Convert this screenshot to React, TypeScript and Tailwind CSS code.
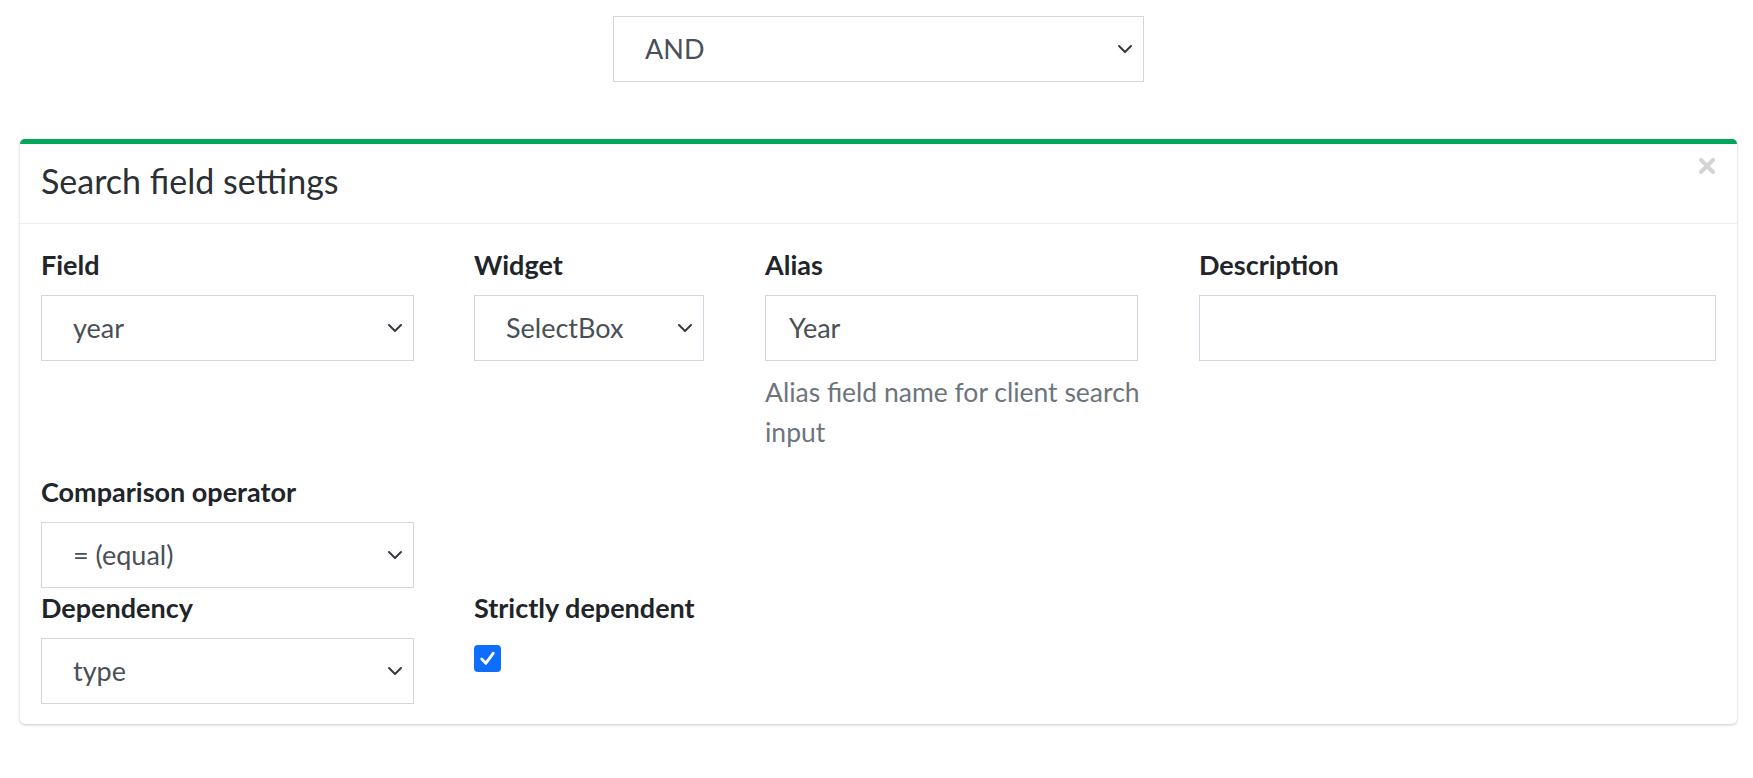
import React from "react";

const font = { fontFamily: "Lato, 'Noto Sans', sans-serif" };

function Chevron() {
  return (
    <svg width="16" height="16" viewBox="0 0 16 16" fill="none" className="shrink-0">
      <polyline points="2,5 8,11 14,5" stroke="#343a40" strokeWidth="2" strokeLinecap="round" strokeLinejoin="round" />
    </svg>
  );
}

function Select({ value, className = "" }: { value: string; className?: string }) {
  return (
    <div
      className={`h-[66px] border border-[#d2d6de] bg-white flex items-center justify-between pl-[31px] pr-[10px] text-[27px] text-[#495057] ${className}`}
    >
      <span>{value}</span>
      <Chevron />
    </div>
  );
}

function Label({ children }: { children: React.ReactNode }) {
  return <div className="text-[27px] leading-[40px] font-bold text-[#212529] mb-[10px]">{children}</div>;
}

export default function App() {
  return (
    <div style={font} className="w-[1753px] min-h-[778px] bg-white pt-[16px]">
      <div className="flex justify-center pl-[4px]">
        <Select value="AND" className="w-[531px]" />
      </div>

      <div className="ml-[20px] mr-[16px] mt-[57px] relative bg-white rounded-[5px] border-t-[5px] border-[#00a65a] shadow-[0_0_1px_rgba(0,0,0,0.125),0_1px_3px_rgba(0,0,0,0.2)]">
        <div className="h-[80px] border-b border-[#eeeeee] flex items-center pl-[21px] pb-[6px]">
          <span className="text-[34px] text-[#2b3035]">Search field settings</span>
        </div>
        <div className="absolute right-[22px] top-[14px]">
          <svg width="16" height="16" viewBox="0 0 16 16">
            <path d="M2 2 L14 14 M14 2 L2 14" stroke="#d4d4d4" strokeWidth="4" strokeLinecap="round" />
          </svg>
        </div>

        <div className="pt-[21px] pb-[20px] px-[21px]">
          <div className="flex mb-[20px]">
            <div className="w-[373px]">
              <Label>Field</Label>
              <Select value="year" />
            </div>
            <div className="w-[230px] ml-[60px]">
              <Label>Widget</Label>
              <Select value="SelectBox" />
            </div>
            <div className="w-[373px] ml-[61px]">
              <Label>Alias</Label>
              <div className="h-[66px] border border-[#d2d6de] flex items-center pl-[23px] text-[27px] text-[#495057]">
                Year
              </div>
              <div className="mt-[11px] text-[26.5px] leading-[40px] text-[#6c757d] whitespace-nowrap">
                Alias field name for client search
                <br />
                input
              </div>
            </div>
            <div className="w-[517px] ml-[61px]">
              <Label>Description</Label>
              <div className="h-[66px] border border-[#d2d6de]"></div>
            </div>
          </div>

          <div className="w-[373px]">
            <Label>Comparison operator</Label>
            <Select value="= (equal)" />
          </div>

          <div className="flex">
            <div className="w-[373px]">
              <Label>Dependency</Label>
              <Select value="type" />
            </div>
            <div className="ml-[60px]">
              <Label>Strictly dependent</Label>
              <div className="mt-[17px] w-[27px] h-[27px] rounded-[4px] bg-[#0d6efd] flex items-center justify-center">
                <svg width="21" height="21" viewBox="0 0 20 20" fill="none">
                  <path d="M4.5 10.5 L8.5 14.5 L15.5 5" stroke="white" strokeWidth="2.8" strokeLinecap="round" strokeLinejoin="round" />
                </svg>
              </div>
            </div>
          </div>
        </div>
      </div>
    </div>
  );
}
